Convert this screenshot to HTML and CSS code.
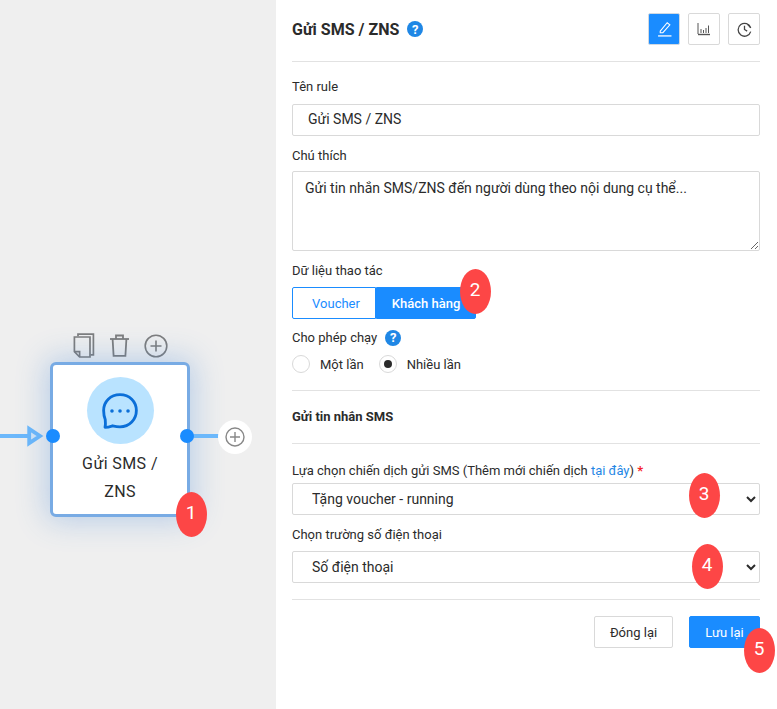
FILE: index.html
```html
<!DOCTYPE html>
<html lang="vi">
<head>
<meta charset="utf-8">
<title>Gửi SMS / ZNS</title>
<link rel="stylesheet" href="styles.css">
</head>
<body>
<div class="app">
  <section class="canvas">
    <div class="edge edge-in"></div>
    <svg class="arrow" width="18" height="22" viewBox="0 0 18 22"><path d="M2.200 3.800 L13 11 L2.200 18.200 Z" fill="#d4e6f7" stroke="#6cb8fb" stroke-width="3.800"/></svg>
    <div class="tools">
      <svg class="tool" width="22" height="25" viewBox="0 0 22 25" fill="none" stroke="#7d7d7d" stroke-width="1.7"><path d="M5 3.2V1.2H20.4V21.8H17.5"/><path d="M1.4 4H17V24H6.6L1.4 18.6Z"/><path d="M1.4 18.6H6.6V24"/></svg>
      <svg class="tool" width="21" height="23" viewBox="0 0 21 23" fill="none" stroke="#7d7d7d" stroke-width="1.8"><path d="M1 5H20"/><path d="M7 5V1.5H14V5"/><path d="M3.6 5L4.6 21.8H16.4L17.4 5"/></svg>
      <svg class="tool" width="24" height="24" viewBox="0 0 24 24" fill="none" stroke="#7d7d7d" stroke-width="1.6"><circle cx="12" cy="12" r="10.8"/><path d="M12 6.5V17.5M6.5 12H17.5"/></svg>
    </div>
    <div class="node">
      <div class="node-icon">
        <svg width="38" height="38" viewBox="0 0 36 36" fill="none" stroke="#0b6fd8" stroke-width="2.700"><path d="M18 2.500C27 2.500 33.500 9 33.500 17.500C33.500 26 27 33 18 33C15 33 13 32.500 11 32C8 33 6 33.500 3.800 33.500C4.400 31 4.300 28.600 4 26C3 23.500 2.500 20.500 2.500 17.500C2.500 9 9 2.500 18 2.500Z" stroke-linejoin="round"/><circle cx="10.400" cy="18" r="1.700" fill="#0b6fd8" stroke="none"/><circle cx="18" cy="18" r="1.700" fill="#0b6fd8" stroke="none"/><circle cx="25.600" cy="18" r="1.700" fill="#0b6fd8" stroke="none"/></svg>
      </div>
      <div class="node-label">Gửi SMS /<br>ZNS</div>
    </div>
    <div class="edge edge-out"></div>
    <span class="port port-in"></span>
    <span class="port port-out"></span>
    <div class="add">
      <svg width="20" height="20" viewBox="0 0 20 20" fill="none" stroke="#888" stroke-width="1.400"><circle cx="10" cy="10" r="9"/><path d="M10 5V15M5 10H15"/></svg>
    </div>
    <span class="badge badge-1">1</span>
  </section>

  <main class="panel">
    <header class="head">
      <div class="title-wrap">
        <h1 class="title">Gửi SMS / ZNS</h1>
        <span class="help help-lg">?</span>
      </div>
      <div class="tabs">
        <button class="tab tab-active" type="button">
          <svg width="15" height="15" viewBox="0 0 14 14" fill="none" stroke="#fff" stroke-width="1"><path d="M3 9.500L9.500 1.700L12 3.700L5.500 11H3Z" transform="translate(0 -1)"/><path d="M1 13H13.500" stroke-width="1.200"/></svg>
        </button>
        <button class="tab" type="button">
          <svg width="14" height="14" viewBox="0 0 14 14" fill="none" stroke="#555" stroke-width="1"><path d="M1 1V12"/><path d="M1 12.500H13" stroke-width="1.400"/><path d="M4 11V7M6.500 11V8M9 11V6M11.500 11V3.500"/></svg>
        </button>
        <button class="tab" type="button">
          <svg width="15" height="15" viewBox="0 0 14 14" fill="none" stroke="#444" stroke-width="1.200"><path d="M12.800 5.500A6 6 0 1 0 12.800 9"/><path d="M7 3.500V7L9.500 8.500"/><path d="M10 2.500L12.800 5.500" stroke-width="1"/></svg>
        </button>
      </div>
    </header>

    <div class="field f-name">
      <label class="label">Tên rule</label>
      <input class="input" type="text" value="Gửi SMS / ZNS">
    </div>
    <div class="field f-note">
      <label class="label">Chú thích</label>
      <textarea class="textarea">Gửi tin nhắn SMS/ZNS đến người dùng theo nội dung cụ thể...</textarea>
    </div>
    <div class="field f-data">
      <label class="label">Dữ liệu thao tác</label>
      <div class="segment">
        <span class="seg seg-off">Voucher</span>
        <span class="seg seg-on">Khách hàng</span>
        <span class="badge badge-2">2</span>
      </div>
    </div>
    <div class="field f-run">
      <label class="label label-help">Cho phép chạy <span class="help help-sm">?</span></label>
      <div class="radios">
        <span class="radio-item"><span class="radio"></span>Một lần</span>
        <span class="radio-item"><span class="radio radio-on"></span>Nhiều lần</span>
      </div>
    </div>

    <h2 class="section">Gửi tin nhắn SMS</h2>

    <div class="field f-camp">
      <label class="label">Lựa chọn chiến dịch gửi SMS (Thêm mới chiến dịch <a class="link" href="#">tại đây</a>) <span class="req">*</span></label>
      <div class="select-wrap">
        <select class="select"><option>Tặng voucher - running</option></select>
        <span class="badge badge-3">3</span>
      </div>
    </div>
    <div class="field f-phone">
      <label class="label">Chọn trường số điện thoại</label>
      <div class="select-wrap">
        <select class="select"><option>Số điện thoại</option></select>
        <span class="badge badge-4">4</span>
      </div>
    </div>

    <footer class="foot">
      <button class="btn btn-close" type="button">Đóng lại</button>
      <div class="save-wrap">
        <button class="btn btn-save" type="button">Lưu lại</button>
        <span class="badge badge-5">5</span>
      </div>
    </footer>
  </main>
</div>
</body>
</html>
```
FILE: styles.css
```css
* { box-sizing: border-box; }
html, body { margin: 0; height: 100%; }
body { font-family: Roboto, "Liberation Sans", sans-serif; font-size: 13px; color: #2b2b2b; background: #fff; overflow: hidden; }
.app { display: flex; width: 777px; height: 709px; }

.canvas { position: relative; width: 276px; flex: none; background: #efefef; }
.edge { position: absolute; height: 4px; background: #6cb8fb; }
.edge-in { left: 0; top: 434px; width: 28px; }
.edge-out { left: 190px; top: 434px; width: 32px; }
.arrow { position: absolute; left: 27px; top: 425px; }
.tools { position: absolute; left: 73px; top: 333px; display: flex; align-items: center; gap: 14px; }
.tool { display: block; }
.node { position: absolute; left: 50px; top: 362px; width: 140px; height: 155px; background: #fff; border: 3px solid #78abe4; border-radius: 6px; box-shadow: 0 0 30px 4px rgba(60, 130, 215, .3); display: flex; flex-direction: column; align-items: center; padding-top: 12px; }
.node-icon { width: 67px; height: 67px; border-radius: 50%; background: #b9e3ff; display: flex; align-items: center; justify-content: center; }
.node-label { margin-top: 6px; font-size: 16px; line-height: 28px; text-align: center; color: #2b2b2b; letter-spacing: .4px; }
.port { position: absolute; width: 14px; height: 14px; border-radius: 50%; background: #1a8cff; }
.port-in { left: 46px; top: 429px; }
.port-out { left: 180px; top: 429px; }
.add { position: absolute; left: 218px; top: 420px; width: 34px; height: 34px; border-radius: 50%; background: #fff; display: flex; align-items: center; justify-content: center; }

.badge { position: absolute; width: 31px; height: 45px; border-radius: 50%; background: #fd4646; color: #fff; font-size: 19px; display: flex; align-items: center; justify-content: center; z-index: 2; padding: 0 1px 4px 0; }
.badge-1 { left: 176px; top: 492px; }
.badge-2 { left: 460px; top: 269px; position: fixed; }
.badge-3 { left: 689px; top: 473px; position: fixed; }
.badge-4 { left: 692px; top: 544px; position: fixed; }
.badge-5 { left: 744px; top: 628px; position: fixed; }

.panel { flex: 1; padding: 0 17px 0 16px; }
.head { height: 62px; border-bottom: 1px solid #e2e2e2; display: flex; justify-content: space-between; align-items: flex-start; padding-top: 13px; }
.title-wrap { display: flex; align-items: center; gap: 8px; height: 32px; }
.title { margin: 0; font-size: 16px; font-weight: 700; color: #2b2b2b; }
.help { border-radius: 50%; background: #1f87e5; color: #fff; font-weight: 700; display: inline-flex; align-items: center; justify-content: center; }
.help-lg { width: 16px; height: 16px; font-size: 13px; }
.help-sm { width: 16px; height: 16px; font-size: 13px; margin-left: 8px; }
.tabs { display: flex; gap: 8px; }
.tab { width: 32px; height: 32px; padding: 0; border: 1px solid #d9d9d9; border-radius: 2px; background: #fff; display: flex; align-items: center; justify-content: center; }
.tab-active { background: #1a8cff; border-color: #d0d9e2; }

.field { display: flex; flex-direction: column; }
.label { display: block; line-height: 18px; color: #2b2b2b; }
.label-help { display: flex; align-items: center; }
.f-name { margin-top: 16px; }
.f-name .label { margin-bottom: 8px; }
.f-note { margin-top: 11px; }
.f-note .label { margin-bottom: 6px; }
.f-data { margin-top: 11px; }
.f-data .label { margin-bottom: 7px; }
.f-run { margin-top: 10px; }
.f-camp { margin-top: 18px; }
.f-phone { margin-top: 11px; }
.f-camp .label { margin-bottom: 3px; }
.f-phone .label { margin-bottom: 7px; }

.input, .textarea, .select { font-family: inherit; font-size: 14px; color: #2b2b2b; background: #fff; border: 1px solid #d9d9d9; border-radius: 2px; width: 100%; outline: none; }
.input { height: 32px; padding: 0 15px 2px; }
.textarea { display: block; height: 80px; padding: 6px 12px; font-size: 14px; line-height: 20px; resize: vertical; }
.select-wrap { display: block; }
.select { display: block; height: 32px; padding: 0 15px 1px; }

.segment { display: flex; height: 32px; }
.seg { height: 32px; display: flex; align-items: center; justify-content: center; border: 1px solid #1a8cff; }
.seg-off { width: 84px; padding-left: 4px; color: #1a8cff; background: #fff; border-radius: 2px 0 0 2px; }
.seg-on { width: 100px; color: #fff; background: #1a8cff; font-weight: 500; border-radius: 0 2px 2px 0; }

.radios { display: flex; gap: 15px; margin-top: 8px; height: 18px; }
.radio-item { display: flex; align-items: center; gap: 10px; color: #2b2b2b; }
.radio { position: relative; width: 18px; height: 18px; border: 1px solid #d9d9d9; border-radius: 50%; background: #fff; }
.radio-on::after { content: ""; position: absolute; left: 4px; top: 4px; width: 8px; height: 8px; border-radius: 50%; background: #2b2b2b; }

.section { margin: 17px 0 0; padding: 16px 0; height: 54px; line-height: 20px; font-size: 13px; font-weight: 700; border-top: 1px solid #e2e2e2; border-bottom: 1px solid #e2e2e2; color: #2b2b2b; }
.link { color: #1f87e5; text-decoration: none; }
.req { color: #f5222d; font-weight: 700; }

.foot { margin-top: 16px; padding-top: 16px; border-top: 1px solid #e2e2e2; display: flex; justify-content: flex-end; gap: 16px; }
.btn { height: 32px; font-family: inherit; font-size: 13px; border-radius: 2px; padding: 0; }
.btn-close { width: 79px; background: #fff; border: 1px solid #d9d9d9; color: #2b2b2b; }
.btn-save { width: 71px; background: #1a8cff; border: 1px solid #1a8cff; color: #fff; }
.save-wrap { display: block; }
```
